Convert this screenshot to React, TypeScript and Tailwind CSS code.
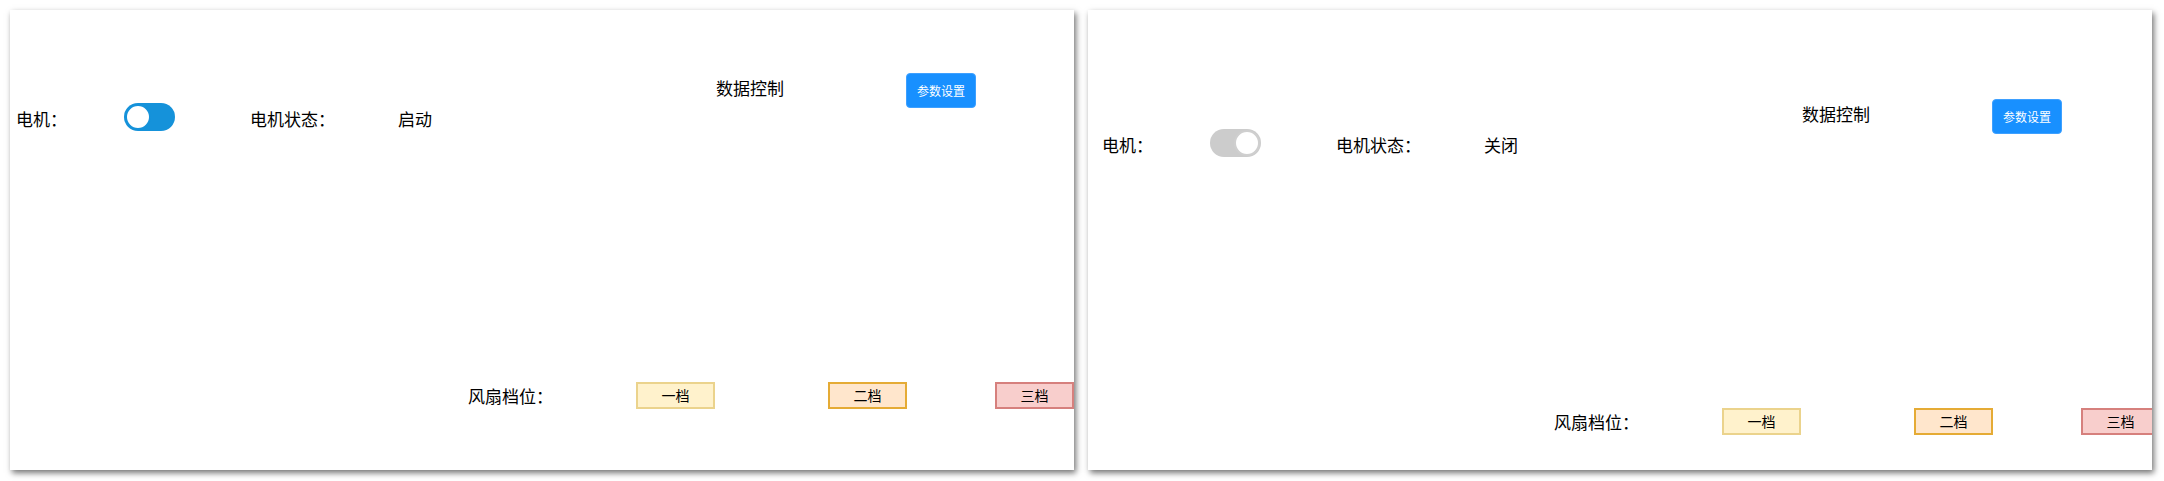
import { useState } from "react";

type PanelProps = {
  motorOn: boolean;
  status: string;
  shifted?: boolean;
};

function Toggle({ on }: { on: boolean }) {
  // the left panel shows a blue track with the knob on the left, the right one grey with knob on the right
  return on ? (
    <div className="flex h-[28px] w-[51px] items-center rounded-full bg-[#1592da] px-[1px]">
      <div className="h-[26px] w-[26px] rounded-full border-[2px] border-[#1592da] bg-white" />
    </div>
  ) : (
    <div className="flex h-[28px] w-[51px] items-center justify-end rounded-full bg-[#cccccc] px-[1px]">
      <div className="h-[26px] w-[26px] rounded-full border-[2px] border-[#cfcfcf] bg-white" />
    </div>
  );
}

function Panel({ motorOn, status, shifted }: PanelProps) {
  const gears = [
    { label: "一档", cls: "bg-[#fff2cc] border-[#ebd38c]", gap: "" },
    { label: "二档", cls: "bg-[#ffe6cc] border-[#e5ab35]", gap: "ml-[113px]" },
    { label: "三档", cls: "bg-[#f8cecc] border-[#d6807d]", gap: "ml-[88px]" },
  ];

  return (
    <section
      className={
        "flex h-[460px] w-[1064px] shrink-0 flex-col overflow-hidden bg-white shadow-[2px_3px_6px_rgba(0,0,0,0.55)] " +
        (shifted ? "pt-[89px] pl-[8px]" : "pt-[63px]")
      }
    >
      <div className="flex items-start">
        <div className="mt-[30px] flex h-[28px] w-[706px] shrink-0 items-center pl-[6px] text-[17px] text-black">
          <span className="w-[108px] pt-[3px]">电机：</span>
          <Toggle on={motorOn} />
          <span className="ml-[75px] w-[148px] pt-[3px]">电机状态：</span>
          <span className="pt-[3px]">{status}</span>
        </div>
        <span className="h-[30px] w-[190px] shrink-0 text-[17px] leading-[30px] text-black">数据控制</span>
        <button className="flex h-[35px] w-[70px] shrink-0 items-center justify-center rounded-[4px] border border-[#3ea0ff] bg-[#1890ff] text-[12px] text-white">
          参数设置
        </button>
      </div>

      <div className="mt-[251px] flex h-[27px] items-center pl-[458px]">
        <span className="w-[168px] shrink-0 text-[17px] text-black">风扇档位：</span>
        {gears.map((g) => (
          <div
            key={g.label}
            className={
              "flex h-[27px] w-[79px] shrink-0 items-center justify-center border-[2px] text-[14px] text-black " +
              g.cls +
              " " +
              g.gap
            }
          >
            {g.label}
          </div>
        ))}
      </div>
    </section>
  );
}

export default function App() {
  const [panels] = useState([
    { motorOn: true, status: "启动" },
    { motorOn: false, status: "关闭" },
  ]);

  return (
    <main
      className="flex h-[481px] w-[2164px] gap-[14px] bg-white p-[10px]"
      style={{ fontFamily: '"Noto Sans CJK SC", "Noto Sans", sans-serif' }}
    >
      {panels.map((p, i) => (
        <Panel key={i} motorOn={p.motorOn} status={p.status} shifted={i === 1} />
      ))}
    </main>
  );
}
